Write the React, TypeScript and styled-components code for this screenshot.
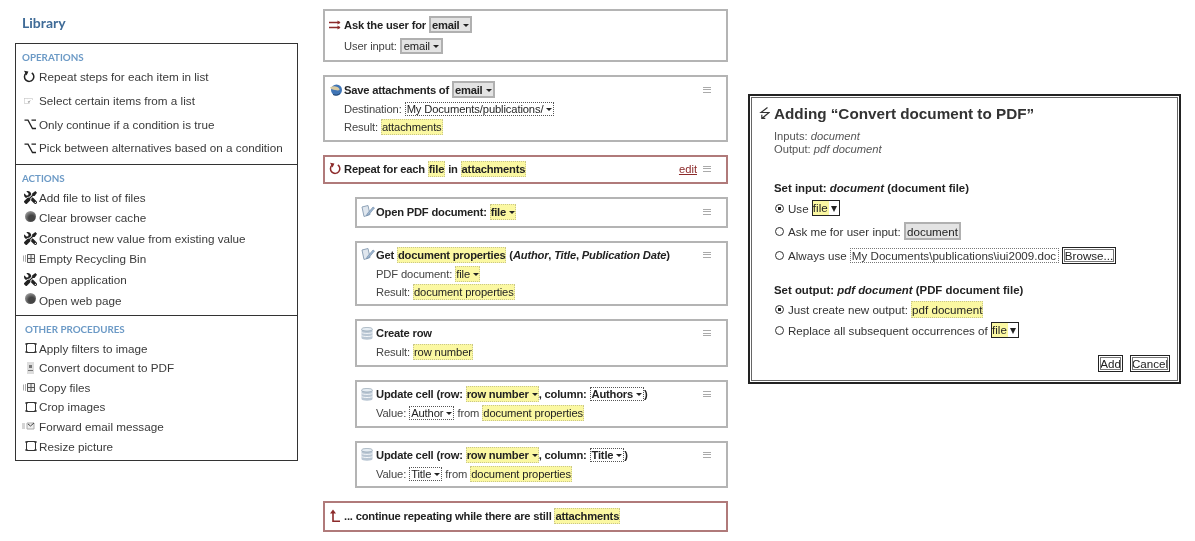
import React from 'react'
import styled, { createGlobalStyle } from 'styled-components'
import { FaTools } from 'react-icons/fa'

const Global = createGlobalStyle`
  html, body { margin: 0; padding: 0; background: #fff; overflow: hidden; }
  body { font-family: "Liberation Sans", Arial, sans-serif; color: #222; }
`

const Page = styled.div`
  width: 1195px;
  height: 541px;
  display: flex;
  align-items: flex-start;
  filter: blur(0.45px);
`

/* ---------- library ---------- */
const LibraryColumn = styled.div`
  width: 283px;
  margin-left: 15px;
  flex: none;
`
const LibraryTitle = styled.h2`
  margin: 0 0 0 7px;
  height: 43px;
  font: bold 14px/46px Lato, sans-serif;
  color: #3f6b97;
`
const LibraryBox = styled.div`
  border: 1px solid #333;
`
const Section = styled.section<{ $pad: number }>`
  padding: 6px 0 ${p => p.$pad}px 7px;
  & + & { border-top: 1px solid #333; }
`
const SectionTitle = styled.div<{ $indent: number; $after: number }>`
  font: bold 9.8px/14px Lato, sans-serif;
  color: #6c9ac6;
  margin: 0 0 ${p => p.$after}px ${p => p.$indent}px;
`
const LibRow = styled.div<{ $h: number }>`
  display: flex;
  align-items: center;
  height: ${p => p.$h}px;
  font-size: 11.7px;
  color: #3a3a3a;
`
const IconSlot = styled.span`
  width: 16px;
  flex: none;
  display: flex;
  align-items: center;
  color: #222;
`
const Globe = styled.span`
  width: 11px;
  height: 11px;
  margin: -3px 0 0 2px;
  border-radius: 50%;
  background: radial-gradient(circle at 60% 65%, #444 0 30%, #888 65%, #ccc 100%);
`
const Hand = styled.span`
  font: 12px "DejaVu Sans", sans-serif;
  color: #777;
`

/* ---------- svg icons ---------- */
const RepeatIcon = ({ color = '#222' }: { color?: string }) => (
  <svg width="12" height="13" viewBox="0 0 12 13">
    <path d="M8.800 2.800A4.700 4.700 0 1 1 3 3.200" fill="none" stroke={color} strokeWidth="1.500" />
    <path d="M1 .8L5.400 1.400 3.600 5.400z" fill={color} />
  </svg>
)
const BranchIcon = () => (
  <svg width="13" height="12" viewBox="0 0 13 12" style={{ marginLeft: 1 }}>
    <path d="M.5 2.200H4L8.500 10.500H12M7.500 2.200H12" fill="none" stroke="#222" strokeWidth="1.300" />
  </svg>
)
const ToolsIcon = () => <FaTools size={13} style={{ marginLeft: 1, transform: 'scaleX(-1)' }} />
const FilesIcon = () => (
  <svg width="13" height="11" viewBox="0 0 13 11">
    <path d="M.5 2.500v6M2.500 2v7" stroke="#aaa" />
    <path d="M4.500 1.500h7v8h-7zM4.500 5.500h7M8 1.500v8" fill="#eee" stroke="#555" />
  </svg>
)
const CropIcon = () => (
  <svg width="12" height="12" viewBox="0 0 12 12" style={{ marginLeft: 2 }}>
    <path d="M1.500 1.500h9v9h-9z" fill="none" stroke="#333" />
    <path d="M0 2h3M9 2h3M0 10h3M9 10h3" stroke="#333" />
  </svg>
)
const DocIcon = () => (
  <svg width="10" height="12" viewBox="0 0 10 12" style={{ marginLeft: 3 }}>
    <path d="M1 0h7v12H1z" fill="#ddd" />
    <path d="M3 3h3v3H3zM2 8h5v1H2z" fill="#777" />
  </svg>
)
const MailIcon = () => (
  <svg width="15" height="10" viewBox="0 0 15 10" style={{ marginLeft: -2 }}>
    <path d="M1 3h3M1 5h3M1 7h3" stroke="#aaa" />
    <path d="M6 2h7v6H6z" fill="#eee" stroke="#aaa" />
    <path d="M7 3l2.500 2L13 2" fill="none" stroke="#444" />
  </svg>
)
const AskIcon = () => (
  <svg width="13" height="12" viewBox="0 0 13 12">
    <path d="M0 3.500h11M0 8.500h11" stroke="#8c2a2a" strokeWidth="1.500" />
    <path d="M8.500 1.500l3 2-3 2zM8.500 6.500l3 2-3 2z" fill="#8c2a2a" />
  </svg>
)
const MailAppIcon = () => (
  <svg width="14" height="12" viewBox="0 0 14 12">
    <circle cx="7.500" cy="6" r="5.500" fill="#3f74b5" />
    <path d="M1 3.500C4 1.500 9 2 10.500 5 11 7 8 6.500 6 6 4 5.500 2 5.500 1 3.500z" fill="#d8c9a0" />
    <path d="M4 10.500c2 1 5 1 7-1" fill="none" stroke="#1f3f66" />
  </svg>
)
const PdfIcon = () => (
  <svg width="14" height="13" viewBox="0 0 14 13">
    <path d="M1 2l6-1.500 2 9-6 2z" fill="#dfe6ee" stroke="#8fa3b8" />
    <path d="M6 9l6-7 1.500 1-6 7-2 .8z" fill="#9db6d0" stroke="#6d88a6" strokeWidth=".6" />
  </svg>
)
const DbIcon = () => (
  <svg width="12" height="13" viewBox="0 0 12 13">
    <path d="M.5 2v9c0 1 2.400 1.700 5.500 1.700s5.500-.7 5.500-1.700V2z" fill="#b9c6d3" />
    <ellipse cx="6" cy="2.200" rx="5.500" ry="1.800" fill="#e6edf3" stroke="#8093a5" strokeWidth=".6" />
    <path d="M.5 5.300c1 1.500 10 1.500 11 0M.5 8.400c1 1.500 10 1.500 11 0" fill="none" stroke="#f2f5f8" />
  </svg>
)
const ContinueIcon = () => (
  <svg width="12" height="14" viewBox="0 0 12 14">
    <path d="M4 3v9.200h7" fill="none" stroke="#8c2a2a" strokeWidth="1.600" />
    <path d="M4 .5l3 4H1z" fill="#8c2a2a" />
  </svg>
)
const BoltIcon = () => (
  <svg width="11" height="12" viewBox="0 0 11 12">
    <path d="M8.500.5L2 5.500H10L3.500 11M2.800 7.800V11.300H6.300" fill="none" stroke="#333" strokeWidth="1.200" />
  </svg>
)

/* ---------- script steps ---------- */
const StepsColumn = styled.div`
  width: 405px;
  margin: 9px 0 0 25px;
  flex: none;
  display: flex;
  flex-direction: column;
  gap: 13px;
`
const StepCard = styled.div<{ $h: number; $nested?: boolean; $red?: boolean }>`
  box-sizing: border-box;
  height: ${p => p.$h}px;
  margin-left: ${p => p.$nested ? 32 : 0}px;
  border: 2px solid ${p => p.$red ? '#b07a7a' : '#b4b4b4'};
  padding: 0 14px 1px 4px;
  display: flex;
  flex-direction: column;
  justify-content: center;
`
const StepHead = styled.div`
  display: flex;
  align-items: center;
  height: 18px;
  margin-bottom: 1px;
  font-size: 11.2px;
  letter-spacing: -0.2px;
  font-weight: bold;
  color: #222;
  white-space: pre;
`
const StepIcon = styled.span`
  width: 15px;
  flex: none;
  display: flex;
  align-items: center;
`
const StepLine = styled.div<{ $top?: number }>`
  display: flex;
  align-items: center;
  height: 18px;
  margin-top: ${p => p.$top ?? 0}px;
  padding-left: 15px;
  font-size: 11.2px;
  letter-spacing: -0.12px;
  color: #444;
  white-space: pre;
`
const Grip = styled.span`
  width: 8px;
  height: 4px;
  margin-left: 6px;
  border-top: 1px solid #aaa;
  border-bottom: 1px solid #aaa;
  background: linear-gradient(#aaa, #aaa) center / 100% 1px no-repeat;
`
const HeadEnd = styled.span`
  margin-left: auto;
  padding-right: 1px;
  display: flex;
  align-items: center;
`
const EditLink = styled.a`
  color: #8c2a2a;
  font-weight: normal;
  letter-spacing: 0;
  text-decoration: underline;
`
const Chip = styled.span<{ $kind: 'gray' | 'yellow' | 'plain'; $big?: boolean }>`
  display: inline-flex;
  align-items: center;
  gap: 2px;
  color: #222;
  padding: ${p => p.$kind === 'gray' ? (p.$big ? '0.5px 1px' : '0 2px') : p.$kind === 'yellow' ? '1px 0' : '0 1px'};
  background: ${p => p.$kind === 'gray' ? '#e3e3e3' : p.$kind === 'yellow' ? '#fbf8a2' : '#fff'};
  border: ${p => p.$kind === 'gray'
    ? '2px solid #b0b0b0'
    : p.$kind === 'yellow' ? '1px dotted #c9c68a' : '1px dotted #555'};
`
const Caret = styled.i`
  width: 0;
  height: 0;
  border: 3px solid transparent;
  border-top: 3.5px solid #222;
  border-bottom: 0;
  margin: 1px 0 0 1px;
`

const Em = styled.em`
  font-style: italic;
`

/* ---------- dialog ---------- */
const Dialog = styled.div`
  box-sizing: border-box;
  width: 433px;
  height: 290px;
  margin: 94px 0 0 20px;
  flex: none;
  border: 2px solid #222;
  padding: 1px;
`
const DialogInner = styled.div`
  box-sizing: border-box;
  height: 100%;
  border: 1px solid #666;
  padding: 4px 7px 8px 7px;
  display: flex;
  flex-direction: column;
`
const DialogTitle = styled.h3`
  margin: 0;
  height: 22px;
  display: flex;
  align-items: center;
  gap: 4px;
  font-size: 15.25px;
  font-weight: bold;
  color: #333;
`
const DialogMeta = styled.div`
  margin: 6px 0 0 15px;
  font-size: 11.2px;
  line-height: 13px;
  color: #555;
`
const DialogBody = styled.div`
  margin: 23px 0 0 15px;
`
const Group = styled.div`
  & + & { margin-top: 14px; }
`
const GroupTitle = styled.div`
  height: 18px;
  display: flex;
  align-items: center;
  white-space: pre;
  font-size: 11.4px;
  font-weight: bold;
  color: #222;
`
const ChoiceRow = styled.div<{ $h: number }>`
  height: ${p => p.$h}px;
  display: flex;
  align-items: center;
  white-space: pre;
  font-size: 11.6px;
  color: #333;
`
const Radio = styled.span<{ $on?: boolean }>`
  box-sizing: border-box;
  width: 9px;
  height: 9px;
  margin: 0 4px 0 1px;
  border: 1px solid #333;
  border-radius: 50%;
  background: ${p => p.$on ? 'radial-gradient(circle, #222 0 1.500px, #fff 2px)' : '#fff'};
`
const FileSelect = styled.span`
  display: inline-flex;
  align-items: center;
  height: 14px;
  border: 1px solid #222;
  background: #fff;
  color: #222;
`
const FileName = styled.span`
  background: #fbf8a2;
  padding-right: 1px;
  height: 100%;
  line-height: 13px;
`
const FileArrow = styled.i`
  width: 0;
  height: 0;
  margin: 1px 2px 0;
  border: 3.5px solid transparent;
  border-top: 6px solid #222;
  border-bottom: 0;
`
const PathBox = styled.span`
  box-sizing: border-box;
  width: 209px;
  height: 15px;
  line-height: 13px;
  padding-left: 1px;
  border: 1px dotted #777;
  color: #333;
  overflow: hidden;
`
const DialogButton = styled.button<{ $pad?: number }>`
  box-sizing: border-box;
  height: 17px;
  padding: 0 ${p => p.$pad ?? 1}px;
  margin-left: 3px;
  background: #fff;
  border: 1px solid #222;
  outline: 1px solid #777;
  outline-offset: -3px;
  font: 11.6px/13px "Liberation Sans", Arial, sans-serif;
  color: #222;
`
const DialogActions = styled.div`
  margin-top: auto;
  display: flex;
  justify-content: flex-end;
  gap: 4px;
`

const Library = () => (
  <LibraryColumn>
    <LibraryTitle>Library</LibraryTitle>
    <LibraryBox>
      <Section $pad={4}>
        <SectionTitle $indent={-1} $after={1}>OPERATIONS</SectionTitle>
        <LibRow $h={23.7}><IconSlot><RepeatIcon /></IconSlot>Repeat steps for each item in list</LibRow>
        <LibRow $h={23.7}><IconSlot><Hand>☞</Hand></IconSlot>Select certain items from a list</LibRow>
        <LibRow $h={23.7}><IconSlot><BranchIcon /></IconSlot>Only continue if a condition is true</LibRow>
        <LibRow $h={23.7}><IconSlot><BranchIcon /></IconSlot>Pick between alternatives based on a condition</LibRow>
      </Section>
      <Section $pad={5}>
        <SectionTitle $indent={-1} $after={2}>ACTIONS</SectionTitle>
        <LibRow $h={20.6}><IconSlot><ToolsIcon /></IconSlot>Add file to list of files</LibRow>
        <LibRow $h={20.6}><IconSlot><Globe /></IconSlot>Clear browser cache</LibRow>
        <LibRow $h={20.6}><IconSlot><ToolsIcon /></IconSlot>Construct new value from existing value</LibRow>
        <LibRow $h={20.6}><IconSlot><FilesIcon /></IconSlot>Empty Recycling Bin</LibRow>
        <LibRow $h={20.6}><IconSlot><ToolsIcon /></IconSlot>Open application</LibRow>
        <LibRow $h={20.6}><IconSlot><Globe /></IconSlot>Open web page</LibRow>
      </Section>
      <Section $pad={4}>
        <SectionTitle $indent={2} $after={2}>OTHER PROCEDURES</SectionTitle>
        <LibRow $h={19.6}><IconSlot><CropIcon /></IconSlot>Apply filters to image</LibRow>
        <LibRow $h={19.6}><IconSlot><DocIcon /></IconSlot>Convert document to PDF</LibRow>
        <LibRow $h={19.6}><IconSlot><FilesIcon /></IconSlot>Copy files</LibRow>
        <LibRow $h={19.6}><IconSlot><CropIcon /></IconSlot>Crop images</LibRow>
        <LibRow $h={19.6}><IconSlot><MailIcon /></IconSlot>Forward email message</LibRow>
        <LibRow $h={19.6}><IconSlot><CropIcon /></IconSlot>Resize picture</LibRow>
      </Section>
    </LibraryBox>
  </LibraryColumn>
)

const Steps = () => (
  <StepsColumn>
    <StepCard $h={53}>
      <StepHead><StepIcon><AskIcon /></StepIcon>Ask the user for <Chip $kind="gray" $big>email<Caret /></Chip></StepHead>
      <StepLine $top={2}>User input: <Chip $kind="gray">email<Caret /></Chip></StepLine>
    </StepCard>
    <StepCard $h={67}>
      <StepHead><StepIcon><MailAppIcon /></StepIcon>Save attachments of <Chip $kind="gray" $big>email<Caret /></Chip><HeadEnd><Grip /></HeadEnd></StepHead>
      <StepLine>Destination: <Chip $kind="plain">My Documents/publications/<Caret /></Chip></StepLine>
      <StepLine>Result: <Chip $kind="yellow">attachments</Chip></StepLine>
    </StepCard>
    <StepCard $h={29} $red>
      <StepHead><StepIcon><RepeatIcon color="#8c2a2a" /></StepIcon>Repeat for each <Chip $kind="yellow">file</Chip> in <Chip $kind="yellow">attachments</Chip><HeadEnd><EditLink>edit</EditLink><Grip /></HeadEnd></StepHead>
    </StepCard>
    <StepCard $h={31} $nested>
      <StepHead><StepIcon><PdfIcon /></StepIcon>Open PDF document: <Chip $kind="yellow">file<Caret /></Chip><HeadEnd><Grip /></HeadEnd></StepHead>
    </StepCard>
    <StepCard $h={65} $nested>
      <StepHead><StepIcon><PdfIcon /></StepIcon>Get <Chip $kind="yellow">document properties</Chip> (<Em>Author</Em>, <Em>Title</Em>, <Em>Publication Date</Em>)<HeadEnd><Grip /></HeadEnd></StepHead>
      <StepLine>PDF document: <Chip $kind="yellow">file<Caret /></Chip></StepLine>
      <StepLine>Result: <Chip $kind="yellow">document properties</Chip></StepLine>
    </StepCard>
    <StepCard $h={48} $nested>
      <StepHead><StepIcon><DbIcon /></StepIcon>Create row<HeadEnd><Grip /></HeadEnd></StepHead>
      <StepLine>Result: <Chip $kind="yellow">row number</Chip></StepLine>
    </StepCard>
    <StepCard $h={48} $nested>
      <StepHead><StepIcon><DbIcon /></StepIcon>Update cell (row: <Chip $kind="yellow">row number<Caret /></Chip>, column: <Chip $kind="plain">Authors<Caret /></Chip>)<HeadEnd><Grip /></HeadEnd></StepHead>
      <StepLine>Value: <Chip $kind="plain">Author<Caret /></Chip> from <Chip $kind="yellow">document properties</Chip></StepLine>
    </StepCard>
    <StepCard $h={47} $nested>
      <StepHead><StepIcon><DbIcon /></StepIcon>Update cell (row: <Chip $kind="yellow">row number<Caret /></Chip>, column: <Chip $kind="plain">Title<Caret /></Chip>)<HeadEnd><Grip /></HeadEnd></StepHead>
      <StepLine>Value: <Chip $kind="plain">Title<Caret /></Chip> from <Chip $kind="yellow">document properties</Chip></StepLine>
    </StepCard>
    <StepCard $h={31} $red>
      <StepHead><StepIcon><ContinueIcon /></StepIcon>... continue repeating while there are still <Chip $kind="yellow">attachments</Chip></StepHead>
    </StepCard>
  </StepsColumn>
)

const FileDropdown = () => (
  <FileSelect><FileName>file</FileName><FileArrow /></FileSelect>
)

const AddingDialog = () => (
  <Dialog>
    <DialogInner>
      <DialogTitle><BoltIcon />Adding “Convert document to PDF”</DialogTitle>
      <DialogMeta>
        Inputs: <Em>document</Em><br />
        Output: <Em>pdf document</Em>
      </DialogMeta>
      <DialogBody>
        <Group>
          <GroupTitle>Set input: <Em>document</Em> (document file)</GroupTitle>
          <ChoiceRow $h={22}><Radio $on />Use <FileDropdown /></ChoiceRow>
          <ChoiceRow $h={24}><Radio />Ask me for user input: <Chip $kind="gray" $big>document</Chip></ChoiceRow>
          <ChoiceRow $h={24}><Radio />Always use <PathBox>My Documents\publications\iui2009.doc</PathBox><DialogButton $pad={2}>Browse...</DialogButton></ChoiceRow>
        </Group>
        <Group>
          <GroupTitle>Set output: <Em>pdf document</Em> (PDF document file)</GroupTitle>
          <ChoiceRow $h={21}><Radio $on />Just create new output: <Chip $kind="yellow">pdf document</Chip></ChoiceRow>
          <ChoiceRow $h={20}><Radio />Replace all subsequent occurrences of <FileDropdown /></ChoiceRow>
        </Group>
      </DialogBody>
      <DialogActions>
        <DialogButton>Add</DialogButton>
        <DialogButton>Cancel</DialogButton>
      </DialogActions>
    </DialogInner>
  </Dialog>
)

const App = () => (
  <>
    <Global />
    <Page>
      <Library />
      <Steps />
      <AddingDialog />
    </Page>
  </>
)

export default App
